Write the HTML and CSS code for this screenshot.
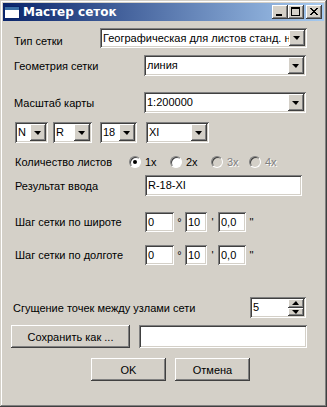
FILE: index.html
```html
<!DOCTYPE html>
<html>
<head>
  <title>Мастер сеток</title>
  <link rel="stylesheet" href="styles.css">
</head>
<body>
  <div class="window">
    <div class="titlebar">
      <svg class="app-icon" width="16" height="13" viewBox="0 0 16 13">
        <rect x="0.5" y="0.5" width="15" height="12" fill="#fff" stroke="#0a246a"/>
        <rect x="1" y="1" width="14" height="3" fill="#3a6ea5"/>
      </svg>
      <span class="title">Мастер сеток</span>
      <div class="caption-btns">
        <span class="cbtn"><svg width="14" height="12" viewBox="0 0 14 12"><rect x="3" y="8" width="6" height="2" fill="#000"/></svg></span>
        <span class="cbtn"><svg width="14" height="12" viewBox="0 0 14 12"><rect x="2.5" y="1.5" width="8" height="8" fill="none" stroke="#000"/><rect x="2" y="1" width="9" height="2" fill="#000"/></svg></span>
        <span class="cbtn close"><svg width="14" height="12" viewBox="0 0 14 12"><path d="M3 2 L10 9 M4 2 L11 9 M10 2 L3 9 M11 2 L4 9" stroke="#000" stroke-width="1"/></svg></span>
      </div>
    </div>

    <div class="client">
      <div class="row r1">
        <span class="label lbl-type">Тип сетки</span>
        <div class="combo w-type"><span class="combo-text">Географическая для листов станд. н</span><span class="drop"></span></div>
      </div>

      <div class="row r2">
        <span class="label lbl-wide">Геометрия сетки</span>
        <div class="combo w-main"><span class="combo-text">линия</span><span class="drop"></span></div>
      </div>

      <div class="row r3">
        <span class="label lbl-wide">Масштаб карты</span>
        <div class="combo w-main"><span class="combo-text">1:200000</span><span class="drop"></span></div>
      </div>

      <div class="row r4">
        <div class="combo w-n"><span class="combo-text">N</span><span class="drop"></span></div>
        <div class="combo w-r"><span class="combo-text">R</span><span class="drop"></span></div>
        <div class="combo w-18"><span class="combo-text">18</span><span class="drop"></span></div>
        <div class="combo w-xi"><span class="combo-text">XI</span><span class="drop"></span></div>
      </div>

      <div class="row r5">
        <span class="label lbl-radio">Количество листов</span>
        <div class="radios">
          <span class="radio-item"><span class="radio checked"></span>1x</span>
          <span class="radio-item"><span class="radio"></span>2x</span>
          <span class="radio-item disabled"><span class="radio"></span>3x</span>
          <span class="radio-item disabled"><span class="radio"></span>4x</span>
        </div>
      </div>

      <div class="row r6">
        <span class="label lbl-wide">Результат ввода</span>
        <div class="field w-result">R-18-XI</div>
      </div>

      <div class="row r7">
        <span class="label lbl-wide">Шаг сетки по широте</span>
        <div class="field w-deg">0</div><span class="unit">°</span>
        <div class="field w-min">10</div><span class="unit">'</span>
        <div class="field w-sec">0,0</div><span class="unit">''</span>
      </div>

      <div class="row r8">
        <span class="label lbl-wide">Шаг сетки по долготе</span>
        <div class="field w-deg">0</div><span class="unit">°</span>
        <div class="field w-min">10</div><span class="unit">'</span>
        <div class="field w-sec">0,0</div><span class="unit">''</span>
      </div>

      <div class="row r9">
        <span class="label lbl-dense">Сгущение точек между узлами сети</span>
        <div class="spin">
          <span class="spin-text">5</span>
          <span class="spin-btns"><span class="sbtn up"></span><span class="sbtn down"></span></span>
        </div>
      </div>

      <div class="row r10">
        <span class="button w-save">Сохранить как ...</span>
        <div class="field w-file"></div>
      </div>

      <div class="row r11">
        <span class="button w-dlg">OK</span>
        <span class="button w-dlg">Отмена</span>
      </div>
    </div>
  </div>
</body>
</html>
```

FILE: styles.css
```css
body {
  margin: 0;
  font-family: "Liberation Sans", Arial, sans-serif;
  font-size: 11px;
  color: #000;
  background-color: #d4d0c8;
}

.window {
  width: 327px;
  height: 407px;
  box-sizing: border-box;
  padding: 3px;
  background-color: #d4d0c8;
  box-shadow: inset -1px -1px #404040, inset 1px 1px #d4d0c8,
              inset -2px -2px #808080, inset 2px 2px #fff;
}

/* title bar */
.titlebar {
  height: 18px;
  display: flex;
  align-items: center;
  padding-left: 1px;
  background: linear-gradient(to right, #0a246a, #a6caf0);
}

.app-icon {
  margin-right: 3px;
}

.title {
  color: #fff;
  font-family: "DejaVu Sans", Verdana, sans-serif;
  font-weight: bold;
  font-size: 12px;
  flex: 1;
}

.caption-btns {
  display: flex;
  margin-right: 2px;
}

.cbtn {
  width: 16px;
  height: 14px;
  box-sizing: border-box;
  display: flex;
  align-items: center;
  justify-content: center;
  background-color: #d4d0c8;
  box-shadow: inset -1px -1px #404040, inset 1px 1px #fff,
              inset -2px -2px #808080, inset 2px 2px #d4d0c8;
}

.cbtn.close {
  margin-left: 2px;
}

/* client area */
.client {
  padding-left: 11px;
}

.row {
  display: flex;
  align-items: center;
}

.r1 { margin-top: 7px; height: 20px; }
.r2 { margin-top: 7px; height: 21px; }
.r3 { margin-top: 16px; height: 21px; }
.r4 { margin-top: 9px; height: 21px; margin-left: 1px; }
.r5 { margin-top: 11px; height: 16px; margin-left: 1px; }
.r6 { margin-top: 5px; height: 21px; margin-left: 1px; }
.r7 { margin-top: 16px; height: 20px; margin-left: 1px; }
.r8 { margin-top: 13px; height: 20px; margin-left: 1px; }
.r9 { margin-top: 32px; height: 21px; margin-left: -1px; }
.r10 { margin-top: 7px; height: 23px; margin-left: -3px; }
.r11 { margin-top: 10px; height: 23px; margin-left: 77px; }

.label {
  white-space: nowrap;
}

.lbl-type { width: 86px; padding-top: 5px; }
.lbl-wide { width: 130px; }
.lbl-radio { width: 114px; }
.lbl-dense { width: 237px; }

/* combo boxes */
.combo {
  display: flex;
  height: 100%;
  box-sizing: border-box;
  padding: 2px;
  background-color: #fff;
  box-shadow: inset 1px 1px #808080, inset -1px -1px #fff,
              inset 2px 2px #404040, inset -2px -2px #d4d0c8;
}

.r1 .combo { height: 20px; }

.combo-text {
  flex: 1;
  overflow: hidden;
  white-space: nowrap;
  padding-left: 1px;
  line-height: 16px;
}

.drop {
  width: 16px;
  flex: none;
  position: relative;
  background-color: #d4d0c8;
  box-shadow: inset -1px -1px #404040, inset 1px 1px #fff,
              inset -2px -2px #808080, inset 2px 2px #d4d0c8;
}

.drop::after {
  content: "";
  position: absolute;
  left: 4px;
  top: 50%;
  margin-top: -2px;
  border-left: 4px solid transparent;
  border-right: 3px solid transparent;
  border-top: 4px solid #000;
}

.w-type { width: 207px; }
.w-main { width: 162px; }
.w-n { width: 33px; }
.w-r { width: 39px; margin-left: 5px; }
.w-18 { width: 37px; margin-left: 8px; }
.w-xi { width: 63px; margin-left: 9px; }

/* radios */
.radios {
  display: flex;
}

.radio-item {
  display: flex;
  align-items: center;
  width: 41px;
}

.radio-item.disabled {
  color: #808080;
  text-shadow: 1px 1px #fff;
  width: 38px;
}

.radio {
  width: 12px;
  height: 12px;
  box-sizing: border-box;
  border-radius: 50%;
  margin-right: 4px;
  position: relative;
  background-color: #fff;
  border: 1px solid;
  border-color: #808080 #fff #fff #808080;
  box-shadow: inset 1px 1px #404040;
}

.disabled .radio {
  background-color: #d4d0c8;
}

.radio.checked::after {
  content: "";
  position: absolute;
  left: 3px;
  top: 3px;
  width: 4px;
  height: 4px;
  border-radius: 50%;
  background-color: #000;
}

/* text fields */
.field {
  height: 100%;
  box-sizing: border-box;
  padding: 2px 3px;
  line-height: 16px;
  background-color: #fff;
  white-space: nowrap;
  box-shadow: inset 1px 1px #808080, inset -1px -1px #fff,
              inset 2px 2px #404040, inset -2px -2px #d4d0c8;
}

.w-result { width: 157px; }
.w-deg { width: 29px; }
.w-min { width: 22px; }
.w-sec { width: 28px; }
.w-file { width: 168px; margin-left: 9px; }

.unit {
  width: 11px;
  text-align: center;
}

/* spin box */
.spin {
  display: flex;
  width: 56px;
  height: 100%;
  box-sizing: border-box;
  padding: 2px;
  background-color: #fff;
  box-shadow: inset 1px 1px #808080, inset -1px -1px #fff,
              inset 2px 2px #404040, inset -2px -2px #d4d0c8;
}

.spin-text {
  flex: 1;
  padding-left: 1px;
  line-height: 16px;
}

.spin-btns {
  width: 16px;
  display: flex;
  flex-direction: column;
}

.sbtn {
  flex: 1;
  position: relative;
  background-color: #d4d0c8;
  box-shadow: inset -1px -1px #404040, inset 1px 1px #fff,
              inset -2px -2px #808080, inset 2px 2px #d4d0c8;
}

.sbtn::after {
  content: "";
  position: absolute;
  left: 4px;
  top: 2px;
  border-left: 4px solid transparent;
  border-right: 3px solid transparent;
}

.sbtn.up::after {
  border-bottom: 4px solid #000;
}

.sbtn.down::after {
  border-top: 4px solid #000;
}

/* push buttons */
.button {
  height: 100%;
  box-sizing: border-box;
  display: flex;
  align-items: center;
  justify-content: center;
  background-color: #d4d0c8;
  box-shadow: inset -1px -1px #404040, inset 1px 1px #fff,
              inset -2px -2px #808080, inset 2px 2px #d4d0c8;
}

.w-save { width: 119px; }
.w-dlg { width: 75px; margin-right: 9px; }
```
